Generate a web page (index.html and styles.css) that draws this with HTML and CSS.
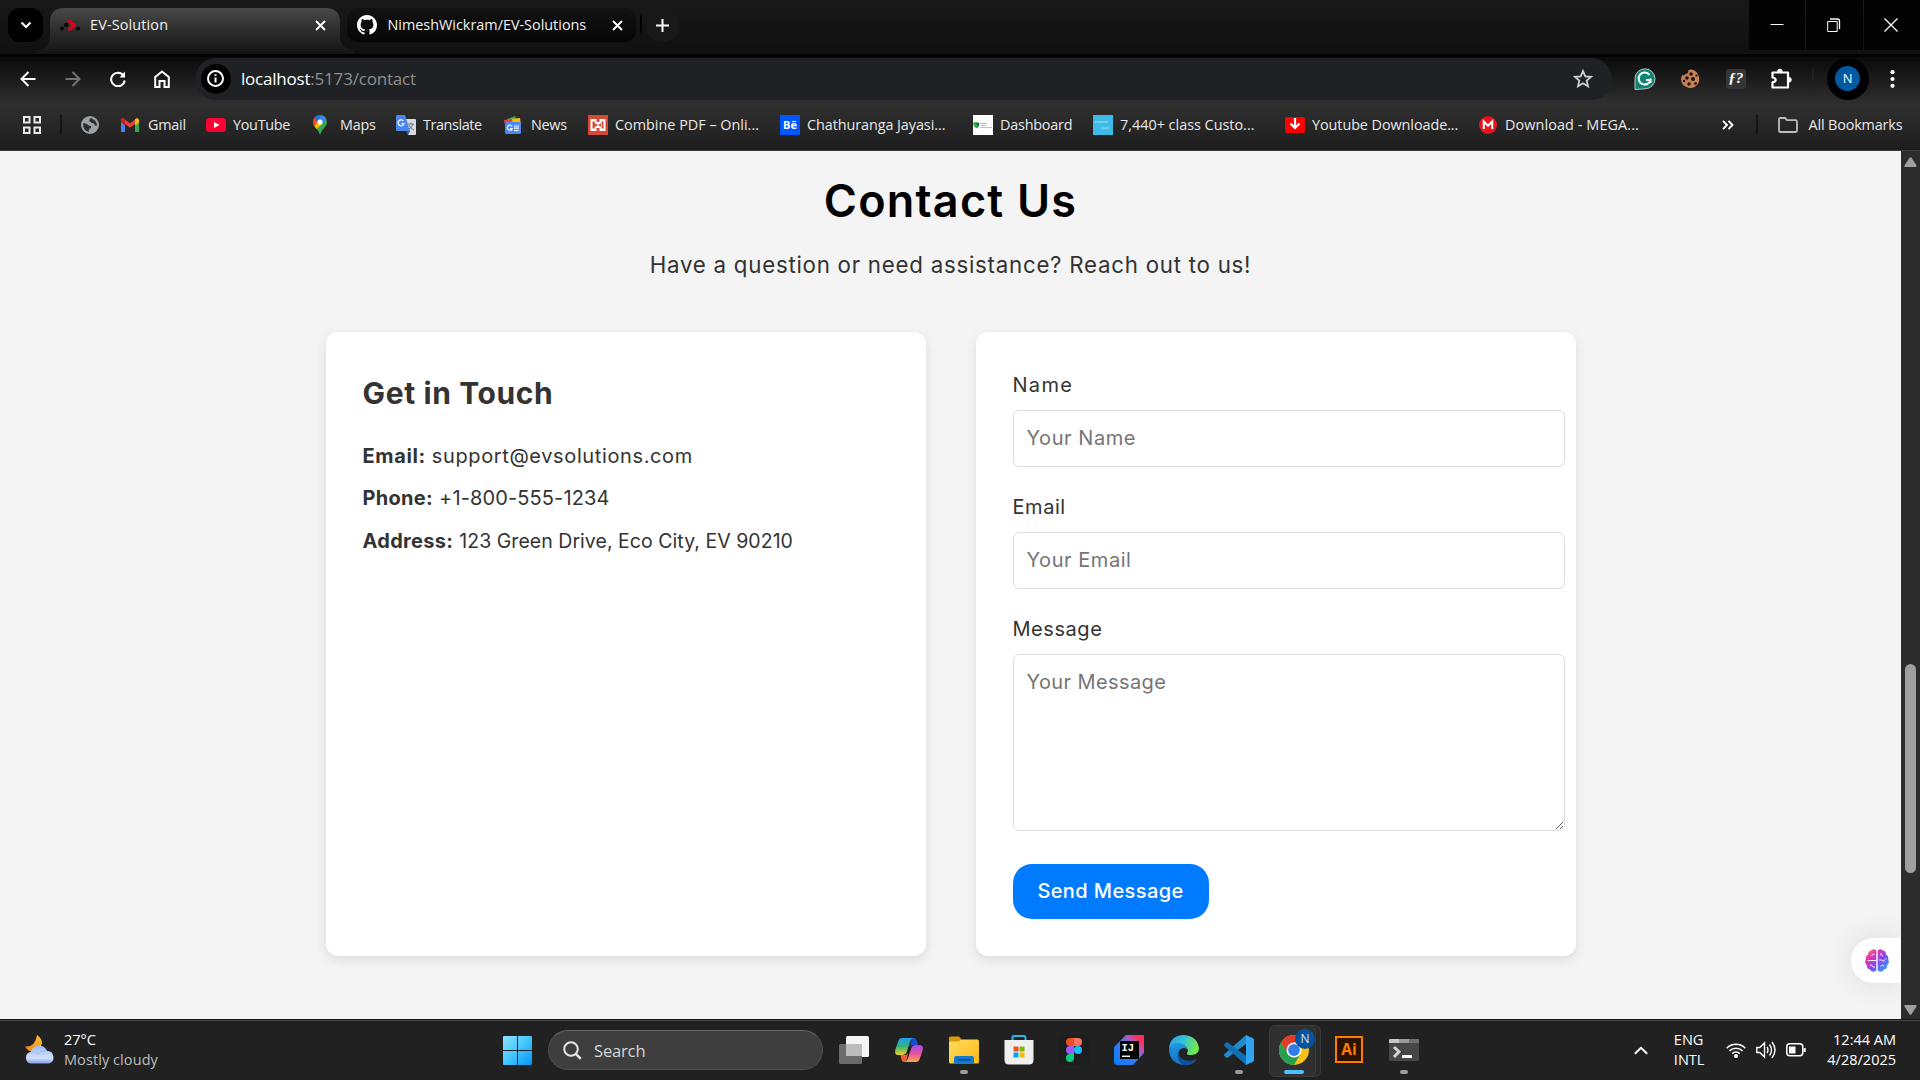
FILE: index.html
```html
<!DOCTYPE html>
<html lang="en">
<head>
<meta charset="utf-8">
<title>EV-Solution</title>
<link rel="stylesheet" href="styles.css">
</head>
<body>
<div class="screen">
  <header class="tabstrip">
    <button class="tab-search" aria-label="Search tabs"><svg width="12" height="8" viewBox="0 0 12 8" fill="none" stroke="#fff" stroke-width="2.2"><path d="M1.5 1.5 6 6l4.500-4.500"/></svg></button>
    <div class="tab tab-active">
      <svg class="tab-shape" width="318" height="46" viewBox="0 0 318 46"><defs><linearGradient id="tabfill" x1="0" y1="0" x2="0" y2="1"><stop offset="0" stop-color="#494949"/><stop offset=".5" stop-color="#2c2c2c"/><stop offset="1" stop-color="#141414"/></linearGradient></defs><path fill="url(#tabfill)" d="M0 42C10 41 14 36 14 28V14C14 5 19 0 28 0H290C299 0 304 5 304 14V28C304 36 308 41 318 42V46H0Z"/></svg>
      <svg class="favicon" width="20" height="12" viewBox="0 0 20 12"><g fill="#080808"><circle cx="2" cy="9.500" r="2"/><circle cx="6.200" cy="6" r="2.200"/><circle cx="18" cy="9.500" r="2"/></g><g fill="#d8001d"><circle cx="9.800" cy="2.200" r="2"/><circle cx="13.500" cy="6" r="2.600"/><circle cx="10" cy="9.800" r="2"/><path d="m9 3 4 5 2-3-4-3zM10 8l4-3 1 3-4 3z"/></g></svg>
      <span class="tab-title title-a">EV-Solution</span>
      <svg class="tab-close" width="11" height="11" viewBox="0 0 11 11" stroke="#fff" stroke-width="1.900"><path d="m1 1 9 9M10 1l-9 9"/></svg>
    </div>
    <div class="tab tab-idle">
      <svg class="favicon" width="20" height="20" viewBox="0 0 16 16" fill="#fff"><path d="M8 0C3.580 0 0 3.580 0 8c0 3.540 2.290 6.530 5.470 7.590.4.070.55-.17.55-.38 0-.19-.01-.82-.01-1.490-2.010.37-2.530-.49-2.690-.94-.09-.23-.48-.94-.82-1.130-.28-.15-.68-.52-.01-.53.63-.01 1.080.58 1.230.82.72 1.210 1.870.87 2.330.66.07-.52.28-.87.51-1.070-1.780-.2-3.640-.89-3.640-3.950 0-.87.31-1.590.82-2.150-.08-.2-.36-1.020.08-2.120 0 0 .67-.21 2.200.82.64-.18 1.320-.27 2-.27s1.360.09 2 .27c1.530-1.040 2.200-.82 2.200-.82.44 1.100.16 1.920.08 2.120.51.56.82 1.270.82 2.150 0 3.070-1.870 3.750-3.650 3.950.29.25.54.73.54 1.480 0 1.070-.01 1.930-.01 2.200 0 .21.15.46.55.38A8.010 8.010 0 0 0 16 8c0-4.420-3.580-8-8-8z"/></svg>
      <span class="tab-title">NimeshWickram/EV-Solutions</span>
      <svg class="tab-close" width="11" height="11" viewBox="0 0 11 11" stroke="#fff" stroke-width="1.900"><path d="m1 1 9 9M10 1l-9 9"/></svg>
    </div>
    <span class="tab-sep"></span>
    <button class="new-tab" aria-label="New tab"><svg width="13" height="13" viewBox="0 0 13 13" stroke="#fff" stroke-width="2"><path d="M6.500 0v13M0 6.500h13"/></svg></button>
    <div class="window-controls">
      <button aria-label="Minimize"><svg width="14" height="14" viewBox="0 0 14 14" stroke="#fff"><path d="M.5 6.500h13"/></svg></button>
      <button aria-label="Restore"><svg width="14" height="14" viewBox="0 0 14 14" fill="none" stroke="#fff"><path d="M.7 3.500h9.500v10H.7z"/><path d="M3 1h7.500q2 0 2 2v8" stroke-width="1.300"/></svg></button>
      <button aria-label="Close"><svg width="14" height="14" viewBox="0 0 14 14" stroke="#fff" stroke-width="1.300"><path d="m.5.5 13 13M13.500.5l-13 13"/></svg></button>
    </div>
  </header>

  <nav class="toolbar">
    <svg class="nav-icon" width="16" height="16" viewBox="0 0 16 16" fill="none" stroke="#fff" stroke-width="2"><path d="M15.500 8H1.800M8.500 1 1.500 8l7 7"/></svg>
    <svg class="nav-icon" width="16" height="16" viewBox="0 0 16 16" fill="none" stroke="#737373" stroke-width="2"><path d="M.5 8h13.700M7.500 1l7 7-7 7"/></svg>
    <svg class="nav-icon" width="16" height="16" viewBox="0 0 16 16" fill="none" stroke="#fff" stroke-width="2"><path d="M13.500 4.500A6.800 6.800 0 1 0 14.700 9.500"/><path d="M15 .5v6H9.500z" fill="#fff" stroke="none"/></svg>
    <svg class="nav-icon" width="16" height="18" viewBox="0 0 16 18" fill="none" stroke="#fff" stroke-width="2"><path d="M1.200 17V7L8 1.500 14.800 7v10h-4.300v-6h-5v6z"/></svg>
    <div class="omnibox">
      <span class="site-info"><svg width="17" height="17" viewBox="0 0 17 17" fill="none" stroke="#fff" stroke-width="2"><circle cx="8.500" cy="8.500" r="7.500"/><path d="M8.500 7.500v5M8.500 4.200v1.800"/></svg></span>
      <span class="url"><b>localhost</b>:5173/contact</span>
      <svg class="star" width="20" height="19" viewBox="0 0 20 19" fill="none" stroke="#d0d0d0" stroke-width="1.800"><path d="m10 2 2.300 5.300 5.700.5-4.300 3.800 1.300 5.700-5-3-5 3 1.300-5.700L2 7.800l5.700-.5z"/></svg>
    </div>
    <div class="extensions">
      <svg width="22" height="22" viewBox="0 0 22 22"><path d="M1 21.500V10.500A10 10 0 1 1 11 20.800z" fill="#0e8472" stroke="#b9c4c2"/><path d="M15.500 7A6 6 0 1 0 16.500 12h-4.300M16.500 10.500V15" fill="none" stroke="#fff" stroke-width="2"/></svg>
      <svg width="20" height="20" viewBox="0 0 20 20"><path d="M8.500 1q4-1.500 7.500 1.500Q21 8 18.500 14 15 20 8.500 18.800 1 17 1 10q0-2 1.500-4 2.500 1 3-1 3 0 3-4z" fill="#c47f57"/><g fill="#20100b"><circle cx="11" cy="5" r="1.700"/><circle cx="7" cy="9" r="1.800"/><circle cx="13" cy="10" r="2"/><circle cx="4" cy="12" r="1.200"/><circle cx="9" cy="15" r="1.700"/><circle cx="15.500" cy="14.500" r="1.300"/><circle cx="16.500" cy="6.500" r="1.100"/></g></svg>
      <span class="ext-font">ƒ?</span>
      <svg width="22" height="22" viewBox="0 0 22 22" fill="none" stroke="#fff" stroke-width="2.200"><path d="M2.500 4.500h15.500v15H2.500v-5.200q3.200-.5 3.200-2.400T2.500 9.500z" stroke-linejoin="round"/><path d="M7.500 3.500a2.300 2.300 0 0 1 4.600 0zM19 9.500a2.300 2.300 0 0 1 0 4.600z" fill="#fff" stroke-width="1"/></svg>
    </div>
    <span class="tool-sep"></span>
    <span class="profile"><i>N</i></span>
    <svg class="menu-dots" width="5" height="18" viewBox="0 0 5 18" fill="#fff"><circle cx="2.500" cy="2.200" r="2.100"/><circle cx="2.500" cy="9" r="2.100"/><circle cx="2.500" cy="15.800" r="2.100"/></svg>
  </nav>

  <nav class="bookmarks">
    <span class="apps"><svg width="18" height="18" viewBox="0 0 18 18" fill="none" stroke="#e8e8e8" stroke-width="2"><path d="M1 1h5.500v5.500H1zM11.500 1H17v5.500h-5.500zM1 11.500h5.500V17H1zM11.500 11.500H17V17h-5.500z"/></svg></span>
    <span class="bm-sep"></span>
    <span class="bm"><svg class="nudge" width="18" height="18" viewBox="0 0 18 18"><circle cx="9" cy="9" r="9" fill="#9aa0a6"/><path d="M2 7q3 0 4.500 1.500T10 10v2q-3 .5-2 4Q2 15 2 7M10 2q-3 2-1 3.500t2 1.500q2-.5 2.500 1.500t2.500 1q0-5-6-7.500" fill="#2c2c2c"/></svg></span>
    <a class="bm"><svg class="nudge" width="18" height="14" viewBox="0 0 18 14"><path d="M0 2v12h4V5z" fill="#4285f4"/><path d="M18 2v12h-4V5z" fill="#34a853"/><path d="M0 2Q0 0 2 0l7 5.400L16 0v4.500l-7 5.300-9-7z" fill="#ea4335"/><path d="M14 1.500Q17-1 18 2v2.500L14 7.500z" fill="#fbbc04"/><path d="M0 1.500v3L4 7.500v-6Q1-1 0 1.500" fill="#c5221f"/></svg><span class="t1">Gmail</span></a>
    <a class="bm"><svg width="20" height="14" viewBox="0 0 20 14"><rect width="20" height="14" rx="3.500" fill="#ff0033"/><path d="m8 4 5.500 3L8 10z" fill="#fff"/></svg><span class="t2">YouTube</span></a>
    <a class="bm"><svg class="nudge" width="14" height="20" viewBox="0 0 14 20"><path d="M7 0a7 7 0 0 0-7 7c0 5 5 6 7 13 2-7 7-8 7-13a7 7 0 0 0-7-7" fill="#34a853"/><path d="M1.600 2.500A7 7 0 0 1 9 .3L4.200 6z" fill="#1a73e8"/><path d="M9 .3A7 7 0 0 1 13.200 4L9.500 8.500 4.200 6z" fill="#4285f4"/><path d="M1.600 2.500Q-1.500 7 1.300 11L5 7z" fill="#ea4335"/><path d="M1.300 11 4.500 7l5 2-6 5z" fill="#fbbc04"/><circle cx="7" cy="7" r="2.500" fill="#fff"/></svg><span class="t1">Maps</span></a>
    <a class="bm"><svg width="20" height="20" viewBox="0 0 20 20"><path d="M8 4h11q1 0 1 1v14q0 1-1 1h-7z" fill="#d8dadf"/><path d="M1 0h8l5 16H1q-1 0-1-1V1q0-1 1-1" fill="#4a86ee"/><path d="m10 16 4 0-2 4z" fill="#2e59a8"/><path d="M7.500 6A3 3 0 1 0 8 8.500H5.500" fill="none" stroke="#fff" stroke-width="1.200"/><path d="M12 9h6M15 7.500V9m2 0q-1 4-4 5m0-4q2 4 5 5" fill="none" stroke="#68788a"/></svg><span class="t3">Translate</span></a>
    <a class="bm"><svg class="nudge" width="18" height="18" viewBox="0 0 18 18"><path d="m3 3 8-3 3 6H3z" fill="#34a853"/><path d="m6 3 10-1 1 7H6z" fill="#fbbc04"/><path d="m0 4 8-1 1 6H1z" fill="#ea4335"/><rect x="1" y="6" width="16" height="12" rx="1.500" fill="#4a8af4"/><path d="M8 10.500A2.500 2.500 0 1 0 8.200 12.500H6" fill="none" stroke="#fff" stroke-width="1.200"/><path d="M10 10h5M10 12.200h5M10 14.500h5" stroke="#fff" stroke-width="1.200"/></svg><span class="t2">News</span></a>
    <a class="bm"><svg width="20" height="20" viewBox="0 0 20 20"><path d="M0 0h20v20H0z" fill="#d64a35"/><path d="M2.500 4h15v12h-15z" fill="#fff"/><path d="M8.500 4h3v3h-3zM8.500 13h3v3h-3zM4.500 6.500h2.200v7H4.500zM13.300 6.500h2.200v7h-2.200zM6 7.500l4 2.500-4 2.500zM14 7.500 10 10l4 2.500z" fill="#d64a35"/></svg><span>Combine PDF – Onli...</span></a>
    <a class="bm"><span class="behance">Bē</span><span class="t6">Chathuranga Jayasi...</span></a>
    <a class="bm"><svg width="20" height="20" viewBox="0 0 20 20"><path d="M0 0h20v20H0z" fill="#fff"/><path d="M0 8q3-2 6 0v3q-2 3-3 2-3-2-3-5" fill="#39a935"/><path d="m3 8 3 4V8z" fill="#175a9c"/><path d="M7 8.500h7M8 10.500h5" stroke="#8fa9c0" stroke-width=".8"/><path d="M7 12.500h12" stroke="#8fd086" stroke-width=".8"/></svg><span class="t1">Dashboard</span></a>
    <a class="bm"><svg width="20" height="20" viewBox="0 0 20 20"><path d="M0 0h20v20H0z" fill="#3fbbe8"/><path d="M2 7h13M8 13h8" stroke="#74cdee" stroke-width="2"/></svg><span>7,440+ class Custo...</span></a>
    <a class="bm"><svg width="20" height="16" viewBox="0 0 20 16"><rect width="20" height="16" rx="2" fill="#f00"/><path d="M10 1v9M5.500 6.500 10 11l4.500-4.500" fill="none" stroke="#fff" stroke-width="2.200"/></svg><span class="t6">Youtube Downloade...</span></a>
    <a class="bm"><svg width="18" height="18" viewBox="0 0 18 18"><circle cx="9" cy="9" r="9" fill="#e8141c"/><path d="M4.800 13V5.500L9 9.700l4.200-4.200V13" fill="none" stroke="#fff" stroke-width="2.100"/></svg><span class="t5">Download - MEGA...</span></a>
    <svg class="more" width="12" height="10" viewBox="0 0 12 10" fill="none" stroke="#fff" stroke-width="1.900"><path d="m1 .8 4 4.200-4 4.200M6.500.8l4 4.200-4 4.200"/></svg>
    <span class="bm-sep"></span>
    <a class="bm all"><svg width="20" height="16" viewBox="0 0 20 16" fill="none" stroke="#bdbdbd" stroke-width="1.800"><path d="M1 2.500Q1 1 2.500 1H7l2 2.200h8.500q1.500 0 1.500 1.500v8.800q0 1.500-1.500 1.500h-15Q1 15 1 13.500z"/></svg><span class="t4">All Bookmarks</span></a>
  </nav>

  <div class="viewport">
    <main class="page">
      <h1>Contact Us</h1>
      <p class="lead">Have a question or need assistance? Reach out to us!</p>
      <div class="cards">
        <section class="card">
          <h2>Get in Touch</h2>
          <p class="info"><strong class="w-email">Email:</strong><span class="v-email">support@evsolutions.com</span></p>
          <p class="info"><strong>Phone:</strong><span class="v-phone">+1-800-555-1234</span></p>
          <p class="info"><strong>Address:</strong><span class="v-address">123 Green Drive, Eco City, EV 90210</span></p>
        </section>
        <form class="card">
          <label for="name" class="l-name">Name</label>
          <input id="name" type="text" placeholder="Your Name">
          <label for="email">Email</label>
          <input id="email" type="email" placeholder="Your Email">
          <label for="message">Message</label>
          <textarea id="message" placeholder="Your Message"></textarea>
          <button type="button" class="send">Send Message</button>
        </form>
      </div>
      <div class="assistant"><svg width="24" height="23" viewBox="0 0 24 23"><defs><linearGradient id="brain" x1="0" y1="0" x2="1" y2="1"><stop offset="0" stop-color="#ff9a3d"/><stop offset=".28" stop-color="#e236b6"/><stop offset=".58" stop-color="#7b4df0"/><stop offset="1" stop-color="#22b6ff"/></linearGradient></defs><path fill="url(#brain)" d="M11.300 1.500v20Q7 24.500 5 20.500 1.500 20 2 16.500-1 14 .8 10.500 0 7 3 5.500 3 2 6 1.500 9-1 11.300 1.500M12.700 1.500v20q4.300 3 6.300-1 3.500-.5 3-4 3-2.500 1.200-6Q24 7 21 5.500 21 2 18 1.500 15-1 12.700 1.500"/><path d="M2.500 11.500H11M6 7q1-2 3.500-1.500M5 16q2.500 0 3 2h2M16 4v2l2 1M14 11h2.500l2 1.500M21 9.500 18.500 12M15.500 17.500l1.500-1.500 2 1" fill="none" stroke="#fff" stroke-width=".9"/></svg></div>
    </main>
    <aside class="scrollbar">
      <svg width="13" height="10" viewBox="0 0 13 10" fill="#9f9f9f"><path d="M5.500.8q1-1.200 2 0L12.500 8.500q.4 1.500-1 1.500h-10Q0 10 .5 8.500z"/></svg>
      <span class="thumb"></span>
      <svg width="13" height="10" viewBox="0 0 13 10" fill="#9f9f9f"><path d="M5.500 9.200q1 1.200 2 0L12.500 1.500Q12.900 0 11.500 0h-10Q0 0 .5 1.500z"/></svg>
    </aside>
  </div>

  <footer class="taskbar">
    <div class="weather">
      <svg width="30" height="30" viewBox="0 0 30 30"><defs><linearGradient id="moon" x1="1" y1="0" x2="0" y2="1"><stop offset="0" stop-color="#fcc531"/><stop offset="1" stop-color="#f27a1a"/></linearGradient><linearGradient id="cloud" x1="0" y1="0" x2="0" y2="1"><stop offset="0" stop-color="#9dbdf5"/><stop offset=".7" stop-color="#d4e0f8"/><stop offset="1" stop-color="#7f9fe6"/></linearGradient></defs><path d="M12 0q5 3.500 5 8.500Q15 16 8 17 3 16.500 0 11.500q10 1 12-11.500" fill="url(#moon)"/><path d="M6 28.500a5.800 5.800 0 0 1 0-11.500 8.500 8.500 0 0 1 16-1 6.400 6.400 0 0 1 2 12.500z" fill="url(#cloud)"/><path d="M7 17q4-1 7 2 2-4 8-3" fill="none" stroke="#8daaea" opacity=".6"/></svg>
      <div class="weather-text"><span>27°C</span><span class="dim">Mostly cloudy</span></div>
    </div>
    <svg class="start" width="29" height="29" viewBox="0 0 29 29"><defs><linearGradient id="win" x1="0" y1="0" x2="1" y2="1"><stop offset="0" stop-color="#8fe3ff"/><stop offset=".5" stop-color="#43c6fd"/><stop offset="1" stop-color="#0693f8"/></linearGradient></defs><path fill="url(#win)" d="M1 0h13v14H0V1q0-1 1-1M15 0h13q1 0 1 1v13H15zM0 15h14v14H1q-1 0-1-1zM15 15h14v13q0 1-1 1H15z"/></svg>
    <div class="search"><svg width="19" height="19" viewBox="0 0 19 19" fill="none" stroke="#e6e6e6" stroke-width="2"><circle cx="8" cy="8" r="6.800"/><path d="m12.800 12.800 5 5" stroke-width="2.500"/></svg><span>Search</span></div>
    <div class="apps-row">
      <span class="app"><svg width="30" height="28" viewBox="0 0 30 28"><rect x="7" width="23" height="21" rx="1.500" fill="#f4f4f4"/><rect y="8" width="23" height="20" rx="1.500" fill="#6c6c6c"/><path d="M7 8h16v12H7z" fill="#bcbcbc"/></svg></span>
      <span class="app"><svg width="30" height="28" viewBox="0 0 30 28"><defs><linearGradient id="cp1" x1="0" y1="0" x2="0" y2="1"><stop offset="0" stop-color="#1d9df0"/><stop offset=".5" stop-color="#37b27a"/><stop offset="1" stop-color="#f4cf25"/></linearGradient><linearGradient id="cp2" x1="0" y1="0" x2="0" y2="1"><stop offset="0" stop-color="#9a4cf0"/><stop offset=".5" stop-color="#e8529a"/><stop offset="1" stop-color="#ffa552"/></linearGradient></defs><path d="M18 2h2q2 0 3 3l1 4h-5q-2 0-3 2z" fill="#1c4ed0"/><path d="M12 26h-2q-2 0-3-4l-.5-3H11q2 0 3-2z" fill="#f0602c"/><path d="M8 2h11q-2 1-3 4l-3 9q-1 4-5 4H4Q0 19 1.500 13L4 6q1-4 4-4" fill="url(#cp1)"/><path d="M22 26H11q2-1 3-4l3-9q1-4 5-4h4q4 0 2.500 6L26 22q-1 4-4 4" fill="url(#cp2)"/></svg></span>
      <span class="app running"><svg width="30" height="28" viewBox="0 0 30 28"><defs><linearGradient id="fold" x1="0" y1="0" x2="1" y2="1"><stop offset="0" stop-color="#ffdc62"/><stop offset="1" stop-color="#fdb913"/></linearGradient></defs><path d="M0 2q0-1.500 1.500-1.500H10L13 4v4H0z" fill="#dd9a05"/><path d="M0 5.500h9L13 3.500h15.500Q30 3.500 30 5v21q0 1.500-1.500 1.500h-27Q0 27.500 0 26z" fill="url(#fold)"/><path d="M5 27.500V22q0-2 2-2h16q2 0 2 2v5.500z" fill="#1279cf"/><path d="M8.500 23.800h13" stroke="#0b4c88" stroke-width="1.500"/></svg></span>
      <span class="app"><svg width="30" height="30" viewBox="0 0 30 30"><path d="M8.500 6V2.500q0-1.500 1.500-1.500h10q1.500 0 1.500 1.500V6" fill="none" stroke="#2ab4e8" stroke-width="2"/><path d="M.5 5h29v20q0 4.500-4.500 4.500H5Q.5 29.500.5 25z" fill="#efefef"/><path d="M9.500 11.500h5v5h-5z" fill="#f25022"/><path d="M15.500 11.500h5v5h-5z" fill="#7fba00"/><path d="M9.500 17.500h5v5h-5z" fill="#00a4ef"/><path d="M15.500 17.500h5v5h-5z" fill="#ffb900"/></svg></span>
      <span class="app"><span class="figma"><svg width="16" height="24" viewBox="0 0 16 24"><path d="M8 0H4a4 4 0 0 0 0 8h4z" fill="#f24e1e"/><path d="M8 0h4a4 4 0 0 1 0 8H8z" fill="#ff7262"/><path d="M8 8H4a4 4 0 0 0 0 8h4z" fill="#a259ff"/><circle cx="12" cy="12" r="4" fill="#1abcfe"/><path d="M8 16H4a4 4 0 1 0 4 4z" fill="#0acf83"/></svg></span></span>
      <span class="app"><svg width="30" height="30" viewBox="0 0 30 30"><defs><linearGradient id="ij" x1="0" y1="1" x2="1" y2="0"><stop offset="0" stop-color="#087cfa"/><stop offset=".5" stop-color="#3f79f0"/><stop offset=".68" stop-color="#a65bc8"/><stop offset=".85" stop-color="#fe315d"/></linearGradient></defs><path d="M0 12 12 0h17q1 0 1 1v17L19 30H3q-3 0-3-3z" fill="url(#ij)"/><path d="M6 6h19v18H6z"/><text x="7.500" y="15.500" class="ij-text">IJ</text><path d="M8 21.300h8" stroke="#fff" stroke-width="1.500"/></svg></span>
      <span class="app"><svg width="30" height="30" viewBox="0 0 30 30"><defs><linearGradient id="eg" x1="0" y1="0" x2="1" y2=".3"><stop offset="0" stop-color="#2a9ce4"/><stop offset=".5" stop-color="#35c1d9"/><stop offset="1" stop-color="#6fe94f"/></linearGradient><linearGradient id="eg2" x1="0" y1="0" x2="0" y2="1"><stop offset="0" stop-color="#2198df"/><stop offset="1" stop-color="#1470c9"/></linearGradient></defs><path d="M0 14Q1 0 15 0q13 1 15 13 0 7-8 7-5 0-4-2 2-3-1-6Q10 7 0 14" fill="url(#eg)"/><path d="M0 15Q3 7 11 8q6 1 7 6-5-3-8 2-2 5 2 9 7 6 16-1-5 7-14 6Q1 28 0 15" fill="url(#eg2)"/><path d="M10 14q-2 5 2 9 7 5 15 1-5 7-13 6-8-6-4-16" fill="#0d4f9c"/></svg></span>
      <span class="app running"><svg width="30" height="30" viewBox="0 0 30 30"><path d="M22 0v9L4 22.500q-1 .5-2 0L.5 21q-1-1 0-2z" fill="#2489ca"/><path d="M22 30v-9L4 7.500q-1-.5-2 0L.5 9q-1 1 0 2z" fill="#1070b3"/><path d="m22 0 7 3.200q1 .5 1 1.800v20q0 1.300-1 1.800L22 30z" fill="#2fa5f3"/></svg></span>
      <span class="app current"><svg width="30" height="30" viewBox="0 0 30 30"><circle cx="15" cy="15" r="15" fill="#fbc116"/><path d="M2 7.500A15 15 0 0 1 28 7.500H15L8.500 18.700z" fill="#e33b2e"/><path d="M2 7.500A15 15 0 0 0 15 30l6.500-11.200H9z" fill="#25a04c"/><circle cx="15" cy="15" r="7.500" fill="#fff"/><circle cx="15" cy="15" r="5.900" fill="#327ee8"/></svg><i class="badge">N</i></span>
      <span class="app"><span class="ai">Ai</span></span>
      <span class="app running"><svg width="30" height="22" viewBox="0 0 30 22"><path d="M0 4V1.500Q0 0 1.500 0h27Q30 0 30 1.500V4z" fill="#9b9b9b"/><path d="M0 4V1.500Q0 0 1.500 0H10v4z" fill="#c9c9c9"/><path d="M20 0h8.500Q30 0 30 1.500V4H20z" fill="#6e6e6e"/><path d="M0 4h30v16.500q0 1.500-1.500 1.500h-27Q0 22 0 20.500z" fill="#474747"/><path d="m5 8 5 4.700L5 18" fill="none" stroke="#d2d2d2" stroke-width="3"/><path d="M13 17.500h10" stroke="#fff" stroke-width="3"/></svg></span>
    </div>
    <div class="tray">
      <svg class="up" width="14" height="9" viewBox="0 0 14 9" fill="none" stroke="#fff" stroke-width="1.900"><path d="m.8 7.800 6.200-6 6.200 6"/></svg>
      <div class="lang"><span>ENG</span><span>INTL</span></div>
      <svg class="wifi" width="20" height="16" viewBox="0 0 20 16" fill="none" stroke="#fff" stroke-width="1.500"><path d="M.7 6.200a13.200 13.200 0 0 1 18.600 0M3.500 8.900a9.300 9.300 0 0 1 13 0M6.200 11.600a5.500 5.500 0 0 1 7.600 0"/><circle cx="10" cy="14" r="1.300" fill="#fff"/></svg>
      <svg class="vol" width="20" height="18" viewBox="0 0 20 18" fill="none" stroke="#fff" stroke-width="1.400"><path d="M.8 6.500h3L8.500 2v14L3.800 11.500h-3zM11 6q2 3 0 6M13.500 3.500q4 5.500 0 11M16 1q6 8 0 16"/></svg>
      <svg class="bat" width="20" height="14" viewBox="0 0 20 14" fill="none" stroke="#fff" stroke-width="1.500"><rect x=".8" y=".8" width="16" height="12" rx="3"/><path d="M3 3.500h6.500v7H3z" fill="#fff" stroke="none"/><path d="M18.700 5v4" stroke-width="2"/></svg>
      <div class="clock"><span>12:44 AM</span><span>4/28/2025</span></div>
    </div>
  </footer>
</div>
</body>
</html>
```
FILE: styles.css
```css
* { box-sizing: border-box; margin: 0; }
body { font-family: "Open Sans", sans-serif; overflow: hidden; }
svg { display: block; flex: none; }
i { font-style: normal; }
button { border: 0; padding: 0; font: inherit; }
.screen { width: 1920px; height: 1080px; display: flex; flex-direction: column; }

/* tab strip */
.tabstrip { height: 54px; display: flex; align-items: flex-start; padding: 8px 0 0 8px; background: linear-gradient(#191919, #101010); }
.tab-search { width: 35px; height: 34px; border-radius: 12px; background: #000; display: grid; place-items: center; margin-right: 7px; }
.tab { height: 34px; display: flex; align-items: center; color: #f1f1f1; font-size: 14.4px; white-space: nowrap; }
.tab-title { line-height: 20px; }
.title-a { letter-spacing: .15px; }
.tab .tab-close { margin-left: auto; }
.tab-active { position: relative; width: 290px; padding: 0 14.500px 0 10px; }
.tab-active .favicon { margin-right: 10px; }
.tab-active > * { position: relative; }
.tab-active .tab-shape { position: absolute; left: -14px; top: 0; }
.tab-idle { width: 289px; margin-left: 7px; padding: 0 13px 0 10px; border-radius: 11px; background: linear-gradient(#121212, #060606); }
.tab-idle .favicon { margin-right: 10.500px; }
.tab-sep { width: 2px; height: 20px; margin: 6px 3px 0 4px; background: #000; }
.new-tab { width: 35px; height: 34px; border-radius: 17px; background: #181818; display: grid; place-items: center; }
.window-controls { margin: -8px 0 0 auto; display: flex; gap: 1px; }
.window-controls button { width: 56.300px; height: 50px; padding-right: 1.500px; background: #030303; display: grid; place-items: center; }

/* toolbar */
.toolbar { height: 50px; border-top: 3px solid #020202; display: flex; align-items: center; padding: 0 25px 4px 20px; background: linear-gradient(#0a0a0a, #2f2f2f); }
.nav-icon { width: 16px; margin-right: 28.800px; }
.nav-icon:nth-child(4) { margin-right: 24.500px; }
.omnibox { width: 1417px; height: 42px; border-radius: 21px; background: #202124; display: flex; align-items: center; padding: 0 19px 0 6px; }
.site-info { width: 30px; height: 30px; border-radius: 50%; background: #000; display: grid; place-items: center; }
.url { margin-left: 10px; font-size: 17px; letter-spacing: -.2px; line-height: 24px; color: #8e8e8e; }
.url b { font-weight: 400; color: #fff; }
.star { margin-left: auto; }
.extensions { display: grid; grid-template-columns: repeat(4, 22px); column-gap: 23.300px; margin-left: 22.300px; place-items: center; }
.ext-font { width: 20px; height: 20px; border-radius: 3px; background: #353535; color: #fff; font: italic 700 15px/19px "Liberation Serif", serif; text-align: center; }
.tool-sep { width: 2px; height: 20px; background: #202020; margin: 0 12.500px 0 20px; }
.profile { width: 42px; height: 42px; border-radius: 50%; background: #000; display: grid; place-items: center; }
.profile i { width: 25px; height: 25px; border-radius: 50%; background: #0259a3; color: #fff; font-size: 13px; line-height: 25px; text-align: center; }
.menu-dots { margin-left: auto; }

/* bookmarks */
.bookmarks { height: 47px; border-bottom: 1px solid #3c3c3c; display: grid; grid-template-columns: 37px 21px 40px 85px 107px 83px 108px 84px 192px 193px 120px 192px 193px 243.500px 34px 22px auto; align-items: center; padding: 0 0 4px 23px; background: linear-gradient(#303030, #1d1d1d); color: #e8e8e8; font-size: 14.4px; white-space: nowrap; }
.bm { display: grid; grid-template-columns: 20px auto; justify-content: start; column-gap: 7px; align-items: center; line-height: 20px; }
.bm > svg, .behance { justify-self: center; }
.bm > .nudge { justify-self: start; }
.bm-sep { width: 2px; height: 20px; background: #151515; }
.t1 { letter-spacing: -.22px; }
.t2 { letter-spacing: -.3px; }
.t3 { letter-spacing: -.4px; }
.t4 { letter-spacing: -.15px; }
.t5 { letter-spacing: .1px; }
.t6 { letter-spacing: -.07px; }
.all { column-gap: 11px; }
.behance { width: 20px; height: 20px; background: #0057ff; color: #fff; font-size: 11px; font-weight: 700; line-height: 20px; text-align: center; }

/* page */
.viewport { height: 868px; display: flex; background: #f4f4f4; }
.page { position: relative; width: 1901px; padding-top: 20px; font-family: Inter, sans-serif; color: #333; overflow: hidden; }
h1 { font-size: 45px; font-weight: 600; letter-spacing: 1.200px; line-height: 60px; color: #000; text-align: center; }
.lead { margin-top: 16px; font-size: 22.300px; line-height: 36px; letter-spacing: .740px; text-align: center; }
.cards { display: flex; justify-content: center; gap: 50px; margin-top: 49px; }
.card { width: 600px; height: 624px; padding: 38px 37px; border-radius: 12px; background: #fff; box-shadow: 0 4px 12px rgba(0, 0, 0, .1); font-size: 20px; letter-spacing: .55px; }
h2 { font-size: 30px; font-weight: 700; line-height: 44px; letter-spacing: .620px; padding-top: 1px; margin-bottom: 19.400px; }
.info { height: 42.600px; display: flex; align-items: center; gap: 6px; letter-spacing: .3px; }
.info .w-email { letter-spacing: .63px; }
.v-email { letter-spacing: .62px; }
.v-phone { letter-spacing: .12px; }
.v-address { font-size: 19.500px; letter-spacing: .04px; }
label { display: block; line-height: 30px; margin-bottom: 10px; }
.l-name { letter-spacing: 1.300px; }
input, textarea { display: block; width: 552px; height: 57px; padding: 11px 13px 13px; border: 1px solid #ddd; border-radius: 6px; background: #fff; font: inherit; line-height: 30px; letter-spacing: .55px; margin-bottom: 25px; }
textarea { height: 177px; padding-top: 12px; resize: vertical; margin-bottom: 33px; letter-spacing: .4px; }
::placeholder { color: #757575; }
.send { width: 196px; height: 55px; padding-bottom: 1px; border-radius: 19px; background: #007bff; color: #fff; font-weight: 500; letter-spacing: .4px; }
.assistant { position: absolute; right: 0; top: 787px; width: 50px; height: 45px; padding: 11px 0 0 14px; border-radius: 23px 0 0 23px; background: #fff; box-shadow: 0 0 28px rgba(0, 0, 0, .11); }
.scrollbar { width: 19px; background: #2c2c2c; display: flex; flex-direction: column; align-items: center; padding: 6px 0 4px; }
.thumb { width: 11px; height: 209px; margin: 497px 0 auto; border-radius: 6px; background: #9f9f9f; }

/* taskbar */
.taskbar { height: 61px; border-top: 1px solid #151515; box-shadow: inset 0 1px #484848; background: #212121; display: flex; align-items: center; color: #fff; font-size: 14.500px; }
.weather { width: 478px; display: flex; align-items: center; gap: 9px; padding-left: 25px; }
.weather-text, .lang, .clock { display: flex; flex-direction: column; line-height: 20px; }
.dim { color: #bdbdbd; letter-spacing: .08px; }
.start { margin-left: 25px; }
.search { width: 275px; height: 40px; margin-left: 16px; padding-left: 14px; border: 1px solid #4d4d4d; border-top-color: #686868; border-radius: 20px; background: #3e3e3e; color: #d6d6d6; display: flex; align-items: center; gap: 12px; font-size: 16.500px; letter-spacing: -.15px; }
.apps-row { display: flex; margin-left: 3.500px; }
.app { position: relative; width: 55px; height: 50px; display: grid; place-items: center; }
.running::after, .current::after { content: ""; position: absolute; bottom: 1px; left: 23.500px; width: 8px; height: 4px; border-radius: 2px; background: #9a9a9a; }
.current::before { content: ""; position: absolute; left: 2.500px; top: 0; width: 45px; height: 50px; border: 1px solid #3b3b3b; border-radius: 6px; background: #303030; box-shadow: 5px 0 0 -1px #2a2a2a, 5px 0 0 #3a3a3a; }
.current svg { position: relative; }
.current::after { left: 17.500px; width: 20px; background: #4cc2ff; }
.badge { position: absolute; left: 28.500px; top: 4px; width: 20px; height: 20px; border-radius: 50%; background: #02559c; font-size: 12px; line-height: 20px; text-align: center; color: #d9e7f3; }
.figma { width: 30px; height: 30px; border-radius: 4px; background: #1e1e1e; display: grid; place-items: center; }
.ij-text { font: 700 10.500px "Liberation Mono", monospace; fill: #fff; }
.ai { width: 28px; height: 27px; margin-bottom: 2px; border: 2px solid #ff7c00; background: #2b1300; color: #ff7c00; font-size: 15.500px; font-weight: 700; line-height: 22px; text-align: center; }
.tray { margin-left: auto; display: flex; align-items: center; padding-right: 24px; }
.lang { margin-left: 26px; width: 30px; margin-right: 22px; }
.vol { margin-left: 10px; }
.bat { margin-left: 10px; margin-right: 21.500px; }
.clock { text-align: right; }
```
